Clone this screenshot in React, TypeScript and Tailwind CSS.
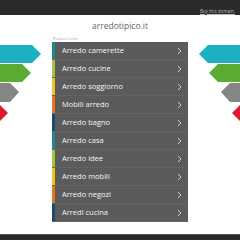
import React from "react";

const links = [
  "Arredo camerette",
  "Arredo cucine",
  "Arredo soggiorno",
  "Mobili arredo",
  "Arredo bagno",
  "Arredo casa",
  "Arredo idee",
  "Arredo mobili",
  "Arredo negozi",
  "Arredi cucina",
];

const stripes = ["#1f8a8c", "#a9c23f", "#f2c31c", "#e9761f", "#1b4a6b"];

function Arrows({ flip }: { flip?: boolean }) {
  return (
    <svg
      width="45"
      height="90"
      viewBox="0 0 45 90"
      className={flip ? "absolute right-0 top-[44px] -scale-x-100" : "absolute left-0 top-[44px]"}
    >
      <polygon points="0,1 32,1 41,10 32,19 0,19" fill="#1cafc3" />
      <polygon points="0,20 22,20 31,29 22,38 0,38" fill="#5bab33" />
      <polygon points="0,39 10,39 19,48 10,58 0,58" fill="#858585" />
      <polygon points="0,60 -1,60 8,69 -1,78 0,78" fill="#e2172f" />
    </svg>
  );
}

export default function App() {
  return (
    <div
      className="relative w-[240px] h-[240px] overflow-hidden bg-white flex flex-col"
      style={{ fontFamily: "'Open Sans', 'Noto Sans', sans-serif" }}
    >
      <div className="h-[15px] shrink-0 bg-[#2a2a2a] flex items-end justify-end pr-[5px] pb-[2px]">
        <span className="text-[4.5px] leading-none text-[#bbb] underline">Buy this domain.</span>
      </div>
      <Arrows />
      <Arrows flip />
      <div className="flex flex-col items-center">
        <div className="mt-[5px] h-[12px] text-[8.5px] leading-[12px] text-[#666]">arredotipico.it</div>
        <div className="w-[136px] mt-[4px]">
          <div className="text-[4px] leading-[6px] text-[#aaa] pl-[1px]">Related Links</div>
          <div className="flex flex-col">
            {links.map((l, i) => (
              <div
                key={l}
                className="h-[18px] flex items-center bg-[#5b5b5b] border-b border-[#636363]"
              >
                <div className="w-[3px] h-full" style={{ background: stripes[i % 5] }} />
                <span className="ml-[7px] flex-1 text-[7.5px] text-[#f4f4f4]">{l}</span>
                <svg width="5" height="8" viewBox="0 0 5 8" className="mr-[6px]">
                  <polyline points="1,1 4,4 1,7" fill="none" stroke="#d0d0d0" strokeWidth="1" />
                </svg>
              </div>
            ))}
          </div>
        </div>
      </div>
      <div className="mt-auto h-[6px] bg-[#2a2a2a] border-t border-[#555]" />
    </div>
  );
}
